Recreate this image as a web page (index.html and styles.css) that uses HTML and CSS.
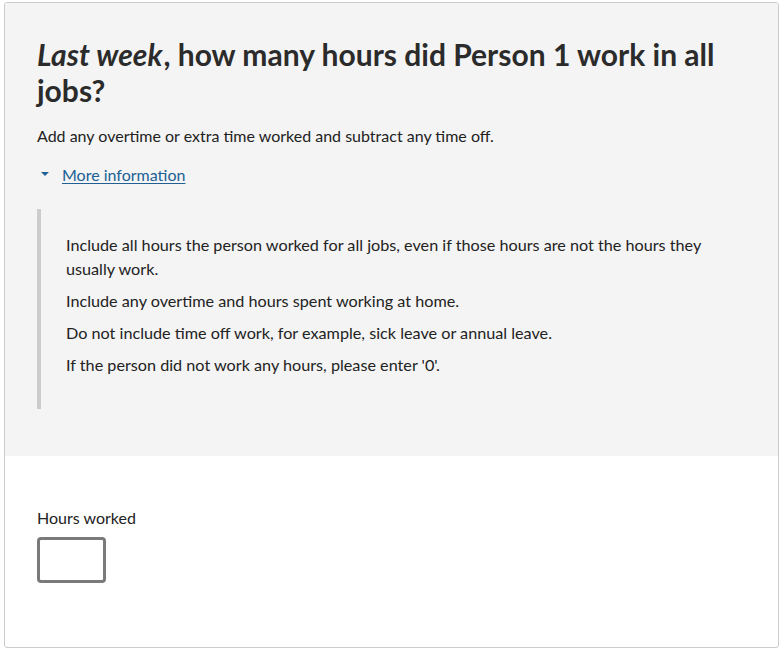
FILE: index.html
```html
<!DOCTYPE html>
<html lang="en">
<head>
    <meta charset="UTF-8">
    <meta name="viewport" content="width=device-width, initial-scale=1.0">
    <title>Hours worked last week</title>
    <link rel="stylesheet" href="styles.css">
</head>
<body>
    <div class="card">
        <div class="question">
            <h1><em>Last week</em>, how many hours did Person 1 work in all<br>jobs?</h1>
            <p class="hint">Add any overtime or extra time worked and subtract any time off.</p>

            <div class="details">
                <div class="details-title">
                    <span class="caret"></span>
                    <a href="#" class="details-link">More information</a>
                </div>
                <div class="details-panel">
                    <p>Include all hours the person worked for all jobs, even if those hours are not the hours they usually work.</p>
                    <p>Include any overtime and hours spent working at home.</p>
                    <p>Do not include time off work, for example, sick leave or annual leave.</p>
                    <p>If the person did not work any hours, please enter '0'.</p>
                </div>
            </div>
        </div>

        <div class="answer">
            <label class="label" for="hours">Hours worked</label>
            <input class="input" type="text" id="hours">
        </div>
    </div>
</body>
</html>
```

FILE: styles.css
```css
body { margin: 0; padding: 2px 4px 4px 4px; font-family: Lato, "Open Sans", sans-serif; color: #222; background: white; }
.card { border: 1px solid #ccc; border-radius: 3px; overflow: hidden; height: 646px; box-sizing: border-box; }
.question { background: #f4f4f4; padding: 33px 32px 47px 32px; }
h1 { font-size: 30px; line-height: 36px; font-weight: 700; margin: 0 0 16px 0; color: #2b2b2b; }
h1 em { font-style: italic; padding-right: 1px; }
.hint { font-size: 16px; line-height: 24px; margin: 0 0 14px 0; }
.details-title { display: flex; align-items: center; gap: 13px; height: 24px; margin-bottom: 23px; }
.caret { width: 0; height: 0; margin-left: 4px; border-left: 4px solid transparent; border-right: 4px solid transparent; border-top: 4px solid #206095; }
.details-link { color: #206095; font-size: 16px; text-decoration: underline; text-underline-offset: 2px; }
.details-panel { border-left: 4px solid #ccc; padding: 24px 24px 32px 25px; }
.details-panel p { font-size: 16.2px; line-height: 24px; margin: 0 0 8px 0; }
.details-panel p:last-child { margin-bottom: 0; }
.answer { padding: 50px 32px 0 32px; }
.label { display: block; font-size: 16px; line-height: 24px; margin-bottom: 7px; }
.input { display: block; width: 69px; height: 46px; box-sizing: border-box; border: 3px solid #7a7a7a; border-radius: 4px; background: white; }
```
